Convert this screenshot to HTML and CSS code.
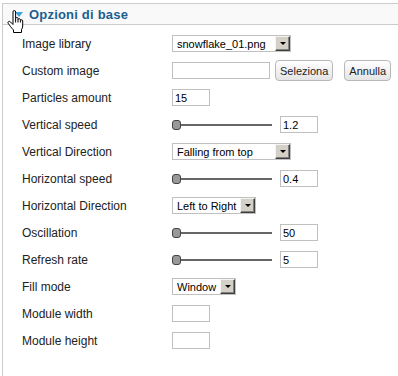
FILE: index.html
```html
<!DOCTYPE html>
<html lang="it">
<head>
    <meta charset="UTF-8">
    <title>Opzioni di base</title>
    <link rel="stylesheet" href="styles.css">
</head>
<body>
    <div class="panel">
        <div class="panel-head">
            <span class="toggle"></span>
            <h3>Opzioni di base</h3>
            <svg class="cursor" width="18" height="24" viewBox="0 0 18 24">
                <path d="M6 2Q6 .5 7.3 .5Q8.6 .5 8.6 2V8.5Q8.6 7.5 9.8 7.5Q11 7.5 11 8.5V9.5Q11 8.7 12.2 8.7Q13.4 8.7 13.4 9.7V10.5Q13.4 9.8 14.5 9.8Q15.7 9.8 15.7 11V16Q15.7 18 14.5 19.5V22.5H6.5V20Q5 18.5 3.5 16.5L1.2 13.3Q.5 12.2 1.5 11.6Q2.5 11 3.5 12L6 14.5Z" fill="#fff" stroke="#000" stroke-width="1"/>
                <path d="M8.6 8.5V12.5M11 9.5V12.5M13.4 10.5V12.5" fill="none" stroke="#000" stroke-width="1"/>
            </svg>
        </div>
        <div class="panel-body">
            <div class="row">
                <label>Image library</label>
                <div class="select select-wide"><span>snowflake_01.png</span><i class="arrow"></i></div>
            </div>
            <div class="row">
                <label>Custom image</label>
                <div class="controls">
                    <input class="field field-long" type="text">
                    <button class="btn">Seleziona</button>
                    <button class="btn btn-gap">Annulla</button>
                </div>
            </div>
            <div class="row">
                <label>Particles amount</label>
                <input class="field" type="text" value="15">
            </div>
            <div class="row">
                <label>Vertical speed</label>
                <div class="controls">
                    <div class="slider"><span class="thumb"></span><span class="track"></span></div>
                    <input class="field slider-value" type="text" value="1.2">
                </div>
            </div>
            <div class="row">
                <label>Vertical Direction</label>
                <div class="select select-wide"><span>Falling from top</span><i class="arrow"></i></div>
            </div>
            <div class="row">
                <label>Horizontal speed</label>
                <div class="controls">
                    <div class="slider"><span class="thumb"></span><span class="track"></span></div>
                    <input class="field slider-value" type="text" value="0.4">
                </div>
            </div>
            <div class="row">
                <label>Horizontal Direction</label>
                <div class="select select-mid"><span>Left to Right</span><i class="arrow"></i></div>
            </div>
            <div class="row">
                <label>Oscillation</label>
                <div class="controls">
                    <div class="slider"><span class="thumb"></span><span class="track"></span></div>
                    <input class="field slider-value" type="text" value="50">
                </div>
            </div>
            <div class="row">
                <label>Refresh rate</label>
                <div class="controls">
                    <div class="slider"><span class="thumb"></span><span class="track"></span></div>
                    <input class="field slider-value" type="text" value="5">
                </div>
            </div>
            <div class="row">
                <label>Fill mode</label>
                <div class="select select-small"><span>Window</span><i class="arrow"></i></div>
            </div>
            <div class="row">
                <label>Module width</label>
                <input class="field" type="text">
            </div>
            <div class="row">
                <label>Module height</label>
                <input class="field" type="text">
            </div>
        </div>
    </div>
</body>
</html>
```

FILE: styles.css
```css
body {
    margin: 0;
    font-family: "Liberation Sans", Arial, sans-serif;
    background: #fff;
    color: #222;
}

.panel {
    margin: 3px 0 0 2px;
    height: 373px;
    border-left: 1px solid #ccc;
    box-sizing: border-box;
}

.panel-head {
    position: relative;
    display: flex;
    align-items: center;
    height: 20px;
    padding-left: 12px;
    background: #f9f9f9;
    border-top: 1px solid #ccc;
    border-bottom: 1px solid #ccc;
}

.toggle {
    width: 0;
    height: 0;
    border-left: 4px solid transparent;
    border-right: 4px solid transparent;
    border-top: 5px solid #3aa3dc;
    margin-top: 1px;
}

.panel-head h3 {
    margin: 0 0 0 6px;
    font-size: 13px;
    font-weight: bold;
    color: #1b5f92;
    letter-spacing: 0.2px;
}

.cursor {
    position: absolute;
    left: 4px;
    top: 6px;
}

.panel-body {
    padding: 5px 0 0 19px;
}

.row {
    display: grid;
    grid-template-columns: 150px auto;
    align-items: center;
    height: 27px;
}

.row label {
    font-size: 12px;
    color: #222;
}

.controls {
    display: flex;
    align-items: center;
}

.field {
    box-sizing: border-box;
    width: 38px;
    height: 17px;
    margin: 0;
    padding: 0 2px;
    border: 1px solid #c0c0c0;
    font-family: inherit;
    font-size: 11px;
    color: #000;
    outline: none;
}

.field-long {
    width: 98px;
}

.btn {
    height: 21px;
    margin-left: 5px;
    padding: 0 4px;
    border: 1px solid #b8b8b8;
    border-radius: 4px;
    background: linear-gradient(#fff, #e4e4e4);
    font-family: inherit;
    font-size: 11px;
    color: #222;
}

.btn-gap {
    margin-left: 11px;
}

.select {
    box-sizing: border-box;
    display: flex;
    align-items: center;
    justify-content: space-between;
    height: 17px;
    padding-left: 4px;
    border: 1px solid #c0c0c0;
    font-size: 11px;
    color: #000;
    background: #fff;
}

.select-wide {
    width: 119px;
}

.select-mid {
    width: 84px;
}

.select-small {
    width: 64px;
}

.arrow {
    box-sizing: border-box;
    position: relative;
    width: 15px;
    height: 15px;
    background: #d4d0c8;
    border: 1px solid;
    border-color: #f4f4f4 #404040 #404040 #f4f4f4;
    box-shadow: inset -1px -1px #808080;
}

.arrow::after {
    content: "";
    position: absolute;
    left: 4px;
    top: 5px;
    border-left: 3px solid transparent;
    border-right: 3px solid transparent;
    border-top: 3px solid #000;
}

.slider {
    display: flex;
    align-items: center;
    width: 100px;
    height: 10px;
}

.thumb {
    box-sizing: border-box;
    width: 9px;
    height: 10px;
    border: 1px solid #444;
    border-radius: 3px;
    background: #999;
}

.track {
    flex: 1;
    height: 2px;
    background: #666;
}

.slider-value {
    margin-left: 8px;
}
```
